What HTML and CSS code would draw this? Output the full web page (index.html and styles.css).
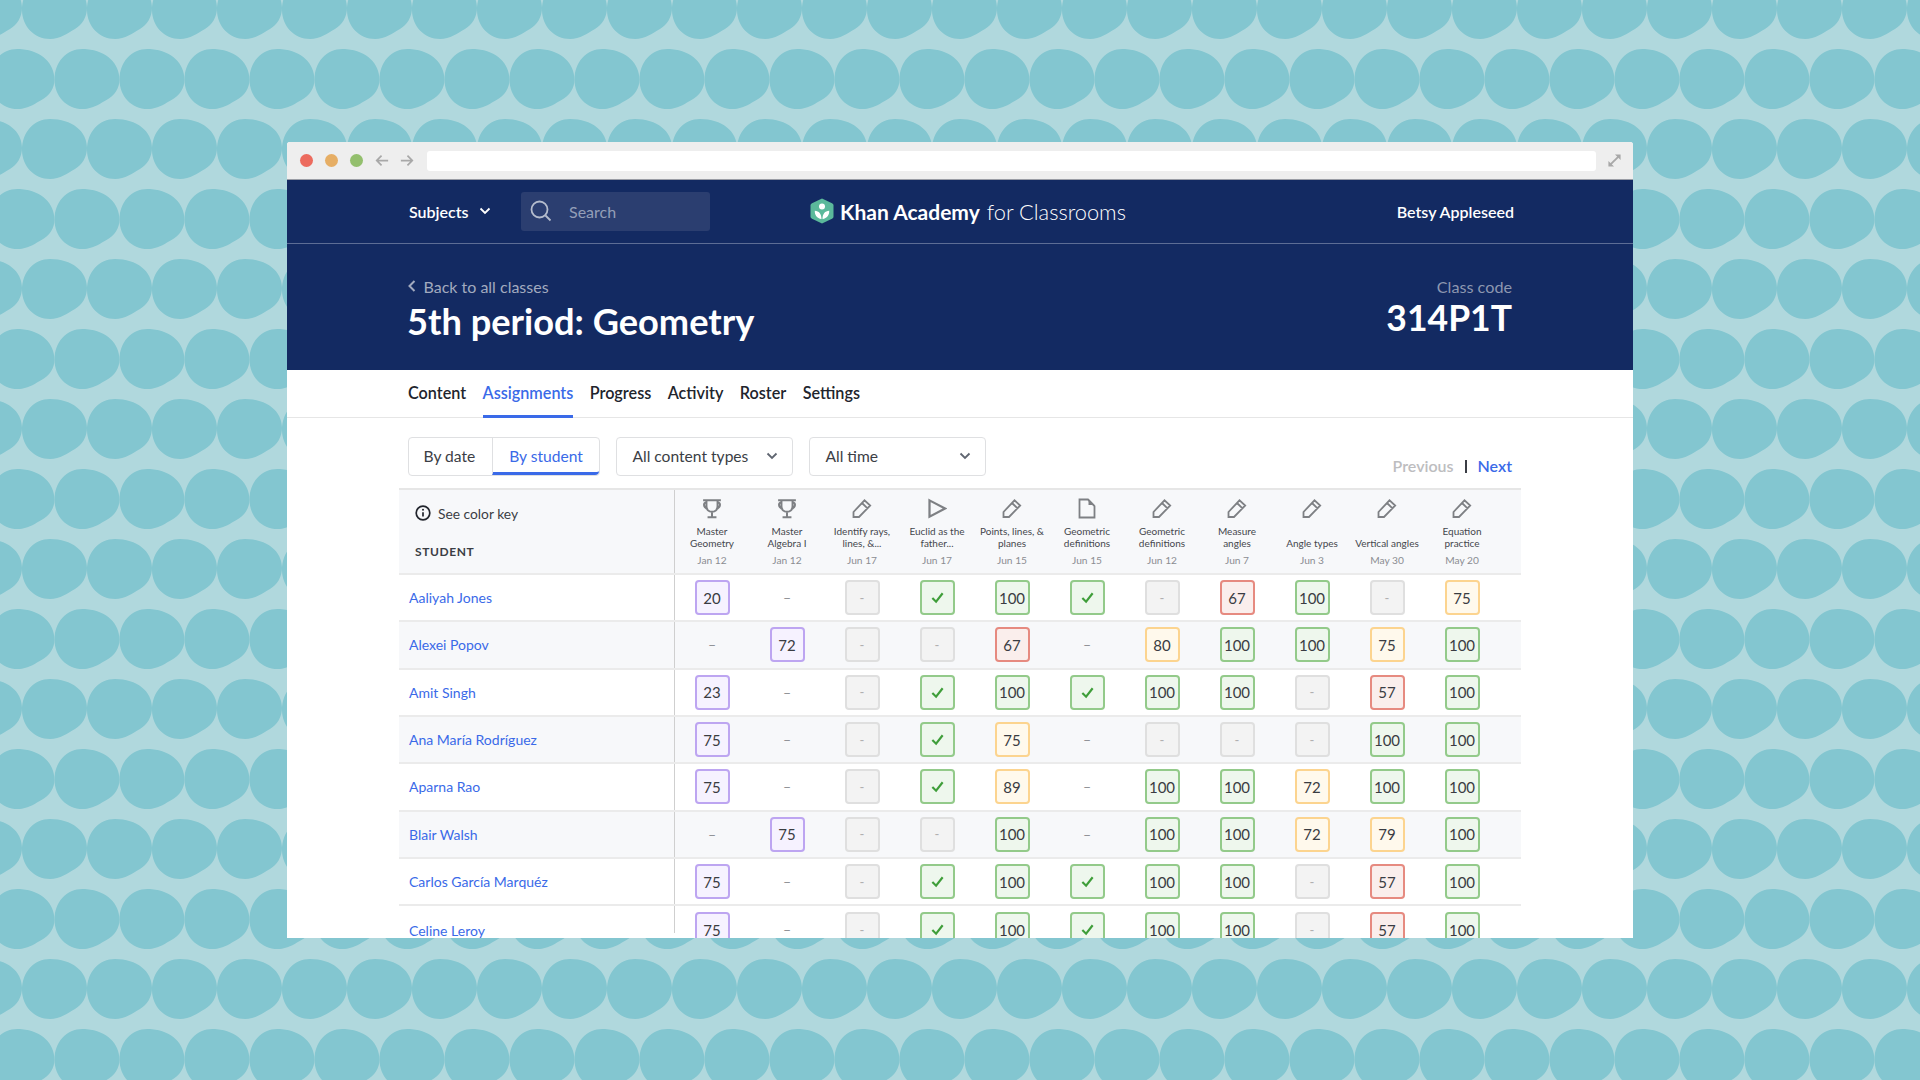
FILE: index.html
```html
<!DOCTYPE html>
<html>
<head>
  <meta charset="UTF-8">
  <title>5th period: Geometry</title>
  <link rel="stylesheet" href="styles.css">
</head>
<body>
  <svg class="icon-defs" width="0" height="0">
    <symbol id="i-trophy" viewBox="0 0 18 18"><path d="M1 1.5H17M4 1.5V7C4 10 6 12 9 12C12 12 14 10 14 7V1.5M4 3.5C1 3.5 1 8 4.6 9.2M14 3.5C17 3.5 17 8 13.4 9.2M9 12V16.5M5 16.8H13"/></symbol>
    <symbol id="i-pencil" viewBox="0 0 20 20"><path d="M1.5 18.5V13.5L12.5 1.8L18.2 7L7 18.5ZM10 4.5L15.5 9.8"/></symbol>
    <symbol id="i-play" viewBox="0 0 16 16"><path d="M2 1.5L14.5 8L2 14.5Z"/></symbol>
    <symbol id="i-doc" viewBox="0 0 18 21"><path d="M1.5 1.5H10L16.5 8V19.5H1.5Z"/><path class="fill" d="M10.5 1L16.5 7H10.5Z"/></symbol>
    <symbol id="i-check" viewBox="0 0 16 16"><path d="M2.5 8.5L6.5 12.5L13.5 3.5"/></symbol>
    <symbol id="i-chevron" viewBox="0 0 12 8"><path d="M1.5 1.5L6 6L10.5 1.5"/></symbol>
  </svg>

  <div class="window">
    <!-- Browser bar -->
    <div class="chrome">
      <span class="dot dot-red"></span>
      <span class="dot dot-yellow"></span>
      <span class="dot dot-green"></span>
      <svg class="arrow" viewBox="0 0 16 14"><path d="M15 7H2M7.5 1.5L2 7L7.5 12.5"/></svg>
      <svg class="arrow" viewBox="0 0 16 14"><path d="M1 7H14M8.5 1.5L14 7L8.5 12.5"/></svg>
      <div class="url-bar"></div>
      <svg class="expand" viewBox="0 0 16 16"><path d="M3 13L13 3"/><path class="fill" d="M8.5 1.5H14.5V7.5ZM1.5 8.5V14.5H7.5Z"/></svg>
    </div>

    <!-- Top nav -->
    <div class="topnav">
      <div class="subjects">Subjects <svg class="chev chev-white"><use href="#i-chevron"/></svg></div>
      <div class="search">
        <svg class="search-icon" viewBox="0 0 22 22"><circle cx="9.5" cy="9.5" r="8"/><path d="M15.5 15.5L20.5 20.5"/></svg>
        <span>Search</span>
      </div>
      <div class="logo">
        <svg class="logo-mark" viewBox="0 0 24 26">
          <path class="hex" d="M12 0.5L22 5.2C23 5.7 23.5 6.5 23.5 7.5V18.5C23.5 19.5 23 20.3 22 20.8L12 25.5L2 20.8C1 20.3 0.5 19.5 0.5 18.5V7.5C0.5 6.5 1 5.7 2 5.2Z"/>
          <circle class="sprout" cx="12" cy="8.5" r="3"/>
          <path class="sprout" d="M11.5 21C7 20.5 4.5 17 4.8 12.8C9 13 11.5 16 11.5 21ZM12.5 21C17 20.5 19.5 17 19.2 12.8C15 13 12.5 16 12.5 21Z"/>
        </svg>
        <span class="logo-name">Khan Academy</span>
        <span class="logo-sub">for Classrooms</span>
      </div>
      <div class="username">Betsy Appleseed</div>
    </div>

    <!-- Class header -->
    <div class="class-header">
      <div>
        <div class="back"><svg class="back-chev" viewBox="0 0 8 12"><path d="M6.5 1L1.5 6L6.5 11"/></svg>Back to all classes</div>
        <h1 class="class-title">5th period: Geometry</h1>
      </div>
      <div class="class-code">
        <div class="code-label">Class code</div>
        <div class="code-value">314P1T</div>
      </div>
    </div>

    <!-- Tabs -->
    <div class="tabs">
      <a class="tab">Content</a>
      <a class="tab active">Assignments</a>
      <a class="tab">Progress</a>
      <a class="tab">Activity</a>
      <a class="tab">Roster</a>
      <a class="tab">Settings</a>
    </div>

    <!-- Filters -->
    <div class="toolbar">
      <div class="toggle">
        <div class="toggle-item">By date</div>
        <div class="toggle-item selected">By student</div>
      </div>
      <div class="select">All content types <svg class="chev"><use href="#i-chevron"/></svg></div>
      <div class="select">All time <svg class="chev"><use href="#i-chevron"/></svg></div>
      <div class="pager"><span class="prev">Previous</span><span class="sep"></span><span class="next">Next</span></div>
    </div>

    <!-- Grade table -->
    <div class="table">
      <div class="row head">
        <div class="name-head">
          <div class="color-key">
            <svg class="info" viewBox="0 0 16 16"><circle cx="8" cy="8" r="6.8"/><path d="M8 7.2V11.5"/><circle class="fill" cx="8" cy="4.8" r="1"/></svg>
            See color key
          </div>
          <div class="student-label">STUDENT</div>
        </div>
        <div class="col"><svg class="col-icon"><use href="#i-trophy"/></svg><div class="col-title">Master<br>Geometry</div><div class="col-date">Jan 12</div></div>
        <div class="col"><svg class="col-icon"><use href="#i-trophy"/></svg><div class="col-title">Master<br>Algebra I</div><div class="col-date">Jan 12</div></div>
        <div class="col"><svg class="col-icon"><use href="#i-pencil"/></svg><div class="col-title">Identify rays,<br>lines, &amp;...</div><div class="col-date">Jun 17</div></div>
        <div class="col"><svg class="col-icon"><use href="#i-play"/></svg><div class="col-title">Euclid as the<br>father...</div><div class="col-date">Jun 17</div></div>
        <div class="col"><svg class="col-icon"><use href="#i-pencil"/></svg><div class="col-title">Points, lines, &amp;<br>planes</div><div class="col-date">Jun 15</div></div>
        <div class="col"><svg class="col-icon"><use href="#i-doc"/></svg><div class="col-title">Geometric<br>definitions</div><div class="col-date">Jun 15</div></div>
        <div class="col"><svg class="col-icon"><use href="#i-pencil"/></svg><div class="col-title">Geometric<br>definitions</div><div class="col-date">Jun 12</div></div>
        <div class="col"><svg class="col-icon"><use href="#i-pencil"/></svg><div class="col-title">Measure<br>angles</div><div class="col-date">Jun 7</div></div>
        <div class="col"><svg class="col-icon"><use href="#i-pencil"/></svg><div class="col-title">Angle types</div><div class="col-date">Jun 3</div></div>
        <div class="col"><svg class="col-icon"><use href="#i-pencil"/></svg><div class="col-title">Vertical angles</div><div class="col-date">May 30</div></div>
        <div class="col"><svg class="col-icon"><use href="#i-pencil"/></svg><div class="col-title">Equation<br>practice</div><div class="col-date">May 20</div></div>
      </div>

      <div class="row">
        <div class="name">Aaliyah Jones</div>
        <div class="cell"><span class="score purple">20</span></div>
        <div class="cell"><span class="dash">–</span></div>
        <div class="cell"><span class="score grey">-</span></div>
        <div class="cell"><span class="score green"><svg class="check"><use href="#i-check"/></svg></span></div>
        <div class="cell"><span class="score green">100</span></div>
        <div class="cell"><span class="score green"><svg class="check"><use href="#i-check"/></svg></span></div>
        <div class="cell"><span class="score grey">-</span></div>
        <div class="cell"><span class="score red">67</span></div>
        <div class="cell"><span class="score green">100</span></div>
        <div class="cell"><span class="score grey">-</span></div>
        <div class="cell"><span class="score yellow">75</span></div>
      </div>

      <div class="row alt">
        <div class="name">Alexei Popov</div>
        <div class="cell"><span class="dash">–</span></div>
        <div class="cell"><span class="score purple">72</span></div>
        <div class="cell"><span class="score grey">-</span></div>
        <div class="cell"><span class="score grey">-</span></div>
        <div class="cell"><span class="score red">67</span></div>
        <div class="cell"><span class="dash">–</span></div>
        <div class="cell"><span class="score yellow">80</span></div>
        <div class="cell"><span class="score green">100</span></div>
        <div class="cell"><span class="score green">100</span></div>
        <div class="cell"><span class="score yellow">75</span></div>
        <div class="cell"><span class="score green">100</span></div>
      </div>

      <div class="row">
        <div class="name">Amit Singh</div>
        <div class="cell"><span class="score purple">23</span></div>
        <div class="cell"><span class="dash">–</span></div>
        <div class="cell"><span class="score grey">-</span></div>
        <div class="cell"><span class="score green"><svg class="check"><use href="#i-check"/></svg></span></div>
        <div class="cell"><span class="score green">100</span></div>
        <div class="cell"><span class="score green"><svg class="check"><use href="#i-check"/></svg></span></div>
        <div class="cell"><span class="score green">100</span></div>
        <div class="cell"><span class="score green">100</span></div>
        <div class="cell"><span class="score grey">-</span></div>
        <div class="cell"><span class="score red">57</span></div>
        <div class="cell"><span class="score green">100</span></div>
      </div>

      <div class="row alt">
        <div class="name">Ana María Rodríguez</div>
        <div class="cell"><span class="score purple">75</span></div>
        <div class="cell"><span class="dash">–</span></div>
        <div class="cell"><span class="score grey">-</span></div>
        <div class="cell"><span class="score green"><svg class="check"><use href="#i-check"/></svg></span></div>
        <div class="cell"><span class="score yellow">75</span></div>
        <div class="cell"><span class="dash">–</span></div>
        <div class="cell"><span class="score grey">-</span></div>
        <div class="cell"><span class="score grey">-</span></div>
        <div class="cell"><span class="score grey">-</span></div>
        <div class="cell"><span class="score green">100</span></div>
        <div class="cell"><span class="score green">100</span></div>
      </div>

      <div class="row">
        <div class="name">Aparna Rao</div>
        <div class="cell"><span class="score purple">75</span></div>
        <div class="cell"><span class="dash">–</span></div>
        <div class="cell"><span class="score grey">-</span></div>
        <div class="cell"><span class="score green"><svg class="check"><use href="#i-check"/></svg></span></div>
        <div class="cell"><span class="score yellow">89</span></div>
        <div class="cell"><span class="dash">–</span></div>
        <div class="cell"><span class="score green">100</span></div>
        <div class="cell"><span class="score green">100</span></div>
        <div class="cell"><span class="score yellow">72</span></div>
        <div class="cell"><span class="score green">100</span></div>
        <div class="cell"><span class="score green">100</span></div>
      </div>

      <div class="row alt">
        <div class="name">Blair Walsh</div>
        <div class="cell"><span class="dash">–</span></div>
        <div class="cell"><span class="score purple">75</span></div>
        <div class="cell"><span class="score grey">-</span></div>
        <div class="cell"><span class="score grey">-</span></div>
        <div class="cell"><span class="score green">100</span></div>
        <div class="cell"><span class="dash">–</span></div>
        <div class="cell"><span class="score green">100</span></div>
        <div class="cell"><span class="score green">100</span></div>
        <div class="cell"><span class="score yellow">72</span></div>
        <div class="cell"><span class="score yellow">79</span></div>
        <div class="cell"><span class="score green">100</span></div>
      </div>

      <div class="row">
        <div class="name">Carlos García Marquéz</div>
        <div class="cell"><span class="score purple">75</span></div>
        <div class="cell"><span class="dash">–</span></div>
        <div class="cell"><span class="score grey">-</span></div>
        <div class="cell"><span class="score green"><svg class="check"><use href="#i-check"/></svg></span></div>
        <div class="cell"><span class="score green">100</span></div>
        <div class="cell"><span class="score green"><svg class="check"><use href="#i-check"/></svg></span></div>
        <div class="cell"><span class="score green">100</span></div>
        <div class="cell"><span class="score green">100</span></div>
        <div class="cell"><span class="score grey">-</span></div>
        <div class="cell"><span class="score red">57</span></div>
        <div class="cell"><span class="score green">100</span></div>
      </div>

      <div class="row last">
        <div class="name">Celine Leroy</div>
        <div class="cell"><span class="score purple">75</span></div>
        <div class="cell"><span class="dash">–</span></div>
        <div class="cell"><span class="score grey">-</span></div>
        <div class="cell"><span class="score green"><svg class="check"><use href="#i-check"/></svg></span></div>
        <div class="cell"><span class="score green">100</span></div>
        <div class="cell"><span class="score green"><svg class="check"><use href="#i-check"/></svg></span></div>
        <div class="cell"><span class="score green">100</span></div>
        <div class="cell"><span class="score green">100</span></div>
        <div class="cell"><span class="score grey">-</span></div>
        <div class="cell"><span class="score red">57</span></div>
        <div class="cell"><span class="score green">100</span></div>
      </div>
    </div>
  </div>
</body>
</html>
```

FILE: styles.css
```css
html, body {
  margin: 0;
  height: 1080px;
  overflow: hidden;
}
body {
  font-family: Lato, "Open Sans", sans-serif;
  color: #21242c;
  background-color: #b0d8dd;
  background-image: url("data:image/svg+xml,%3Csvg xmlns='http://www.w3.org/2000/svg' width='65' height='140' fill='%2383c6d0'%3E%3Cpath d='M0 31C0 13 12 0 28 0C50 0 65 12 65 29C65 38 60 46 53 50C46 54 38 60 28 60C12 60 0 47 0 31Z'/%3E%3Cpath transform='translate(32.5 70)' d='M0 30.7C0 13 12 0 28 0C50 0 65 13 65 30.7C65 39 60 47 52 51C45 55 38 60 28 60C12 60 0 47 0 30.7Z'/%3E%3Cpath transform='translate(-32.5 70)' d='M0 30.7C0 13 12 0 28 0C50 0 65 13 65 30.7C65 39 60 47 52 51C45 55 38 60 28 60C12 60 0 47 0 30.7Z'/%3E%3C/svg%3E");
  background-size: 65px 140px;
  background-position: 22px -21px;
}
.icon-defs {
  display: block;
  height: 0;
}
.fill {
  fill: currentColor;
  stroke: none;
}

.window {
  width: 1346px;
  height: 796px;
  margin: 142px 0 0 287px;
  background: white;
  overflow: hidden;
  border-radius: 3px 3px 0 0;
}

/* browser bar */
.chrome {
  height: 37px;
  display: flex;
  align-items: center;
  background: #eeeeee;
  border-bottom: 1px solid #9a9da5;
  padding-left: 13px;
}
.dot {
  width: 13px;
  height: 13px;
  border-radius: 50%;
  margin-right: 12px;
}
.dot-red { background: #ec6b5e; }
.dot-yellow { background: #e6ae65; }
.dot-green { background: #93bf6d; }
.arrow {
  width: 14px;
  height: 13px;
  margin-right: 11px;
  fill: none;
  stroke: #a8a8a8;
  stroke-width: 2;
}
.url-bar {
  width: 1169px;
  height: 20px;
  margin-left: 2px;
  background: white;
  border-radius: 3px;
}
.expand {
  width: 15px;
  height: 15px;
  margin-left: 11px;
  color: #a8a8a8;
  stroke: #a8a8a8;
  stroke-width: 2;
}

/* top nav */
.topnav {
  height: 62px;
  display: flex;
  align-items: center;
  background: #132a62;
  border-bottom: 1px solid #5d6d95;
  padding: 0 119px 1px 122px;
  color: white;
  font-weight: 600;
  font-size: 16px;
}
.subjects {
  display: flex;
  align-items: center;
  width: 112px;
}
.chev {
  width: 12px;
  height: 8px;
  fill: none;
  stroke: #5f6570;
  stroke-width: 1.8;
}
.chev-white {
  stroke: white;
  margin-left: 10px;
}
.search {
  width: 189px;
  height: 39px;
  display: flex;
  align-items: center;
  background: #2b3e70;
  border-radius: 3px;
  color: #949fb8;
  font-weight: 400;
}
.search-icon {
  width: 22px;
  height: 22px;
  margin: 0 17px 0 9px;
  fill: none;
  stroke: #b4bccd;
  stroke-width: 1.8;
}
.logo {
  display: flex;
  align-items: center;
  margin-left: 100px;
  font-size: 21px;
}
.logo-mark {
  width: 24px;
  height: 26px;
  margin-right: 6px;
}
.hex { fill: #5bb99b; }
.sprout { fill: white; }
.logo-name { font-weight: 700; }
.logo-sub {
  font-weight: 300;
  font-size: 21.8px;
  margin-left: 7px;
}
.username { margin-left: auto; }

/* class header */
.class-header {
  height: 126px;
  display: flex;
  justify-content: space-between;
  background: #132a62;
  padding: 32px 121px 0 120px;
  box-sizing: border-box;
  color: white;
}
.back {
  display: flex;
  align-items: center;
  height: 20px;
  color: #a2aabf;
  font-size: 16px;
  padding-left: 0.5px;
}
.back-chev {
  width: 8px;
  height: 12px;
  margin-right: 8px;
  fill: none;
  stroke: #a2aabf;
  stroke-width: 2;
}
.class-title {
  margin: 3px 0 0;
  font-size: 36.2px;
  line-height: 44px;
  font-weight: 700;
}
.class-code { text-align: right; }
.code-label {
  height: 20px;
  margin-top: 1px;
  line-height: 20px;
  color: #8d97b0;
  font-size: 16.2px;
}
.code-value {
  font-size: 35.5px;
  line-height: 41px;
  font-weight: 700;
}

/* tabs */
.tabs {
  height: 47px;
  display: flex;
  gap: 16.4px;
  padding-left: 121px;
  border-bottom: 1px solid #e6e6e6;
}
.tab {
  line-height: 46px;
  font-size: 16.2px;
  font-weight: 600;
  color: #21242c;
}
.tab.active {
  color: #3a6ae8;
  border-bottom: 3px solid #3a6ae8;
  height: 45px;
}

/* filters */
.toolbar {
  height: 39px;
  display: flex;
  gap: 16px;
  margin-top: 19px;
  padding: 0 121px;
  font-size: 15.6px;
}
.toggle {
  display: flex;
  border: 1px solid #dfe0e2;
  border-radius: 4px;
}
.toggle-item {
  padding: 0 16.5px 0 14.5px;
  line-height: 37px;
  color: #3b3e45;
}
.toggle-item.selected {
  padding: 0 16.5px;
  color: #3a6ae8;
  border-left: 1px solid #dfe0e2;
  border-bottom: 3px solid #3a6ae8;
  border-radius: 0 0 4px 0;
  height: 34px;
}
.select {
  width: 177px;
  box-sizing: border-box;
  display: flex;
  align-items: center;
  justify-content: space-between;
  padding: 0 14px 2px 15px;
  border: 1px solid #dfe0e2;
  border-radius: 4px;
  color: #3b3e45;
}
.pager {
  margin-left: auto;
  display: flex;
  align-items: flex-end;
  font-size: 16px;
  font-weight: 600;
  line-height: 20px;
  height: 39px;
}
.prev { color: #bdbdbf; }
.sep {
  width: 2px;
  height: 13px;
  background: #3b3e45;
  margin: 0 11px 3px;
}
.next { color: #3a6ae8; }

/* table */
.table {
  width: 1122px;
  margin: 12px 0 0 112px;
}
.row {
  display: grid;
  grid-template-columns: 275.5px repeat(11, 75px);
  height: 47.33px;
  box-sizing: border-box;
  border-bottom: 2px solid #ebebeb;
}
.row.alt { background: #f7f8fa; }
.row.head {
  height: 87px;
  background: #f7f8fa;
  border-top: 2px solid #e6e6e6;
}
.row.last { border-bottom: none; }
.name-head {
  border-right: 1px solid #cfcfcf;
  padding: 14px 0 0 16px;
}
.color-key {
  display: flex;
  align-items: center;
  height: 18px;
  font-size: 13.8px;
  color: #3b3e45;
}
.info {
  width: 16px;
  height: 16px;
  margin-right: 7px;
  color: #21242c;
  fill: none;
  stroke: #21242c;
  stroke-width: 1.7;
}
.student-label {
  margin-top: 22px;
  font-size: 12px;
  line-height: 16px;
  font-weight: 700;
  letter-spacing: 0.6px;
  color: #3b3e45;
}
.col {
  display: flex;
  flex-direction: column;
  align-items: center;
  text-align: center;
  padding-top: 8px;
}
.col-icon {
  width: 20px;
  height: 21px;
  fill: none;
  stroke: #7e8084;
  stroke-width: 1.8;
  color: #7e8084;
}
.col-title {
  width: 74px;
  height: 24px;
  margin-top: 6px;
  display: flex;
  align-items: flex-end;
  justify-content: center;
  font-size: 10px;
  line-height: 12px;
  color: #45474d;
}
.col-date {
  margin-top: 3.5px;
  font-size: 10.2px;
  line-height: 14px;
  color: #8b8d92;
}
.name {
  display: flex;
  align-items: center;
  border-right: 1px solid #cfcfcf;
  padding-left: 10px;
  font-size: 14px;
  color: #3a6ae8;
}
.row.last .name {
  height: 5px;
  padding-top: 22px;
}
.cell {
  display: flex;
  align-items: center;
  justify-content: center;
}
.dash {
  color: #8b8d92;
  font-size: 14px;
}
.score {
  width: 35px;
  height: 35px;
  flex: none;
  box-sizing: border-box;
  display: flex;
  align-items: center;
  justify-content: center;
  border: 2px solid;
  border-radius: 4px;
  font-size: 15px;
  color: #3a3c42;
}
.purple { border-color: #bda5f1; background: #f6f2ff; }
.green { border-color: #93ca8a; background: #eef7ed; }
.red { border-color: #e68a80; background: #faeeec; }
.yellow { border-color: #fcd48f; background: #fff9ec; }
.grey { border-color: #dfdfdf; background: #f3f3f3; color: #b0b0b0; font-size: 13px; }
.check {
  width: 15px;
  height: 15px;
  fill: none;
  stroke: #3f9e3a;
  stroke-width: 2.3;
}
```
